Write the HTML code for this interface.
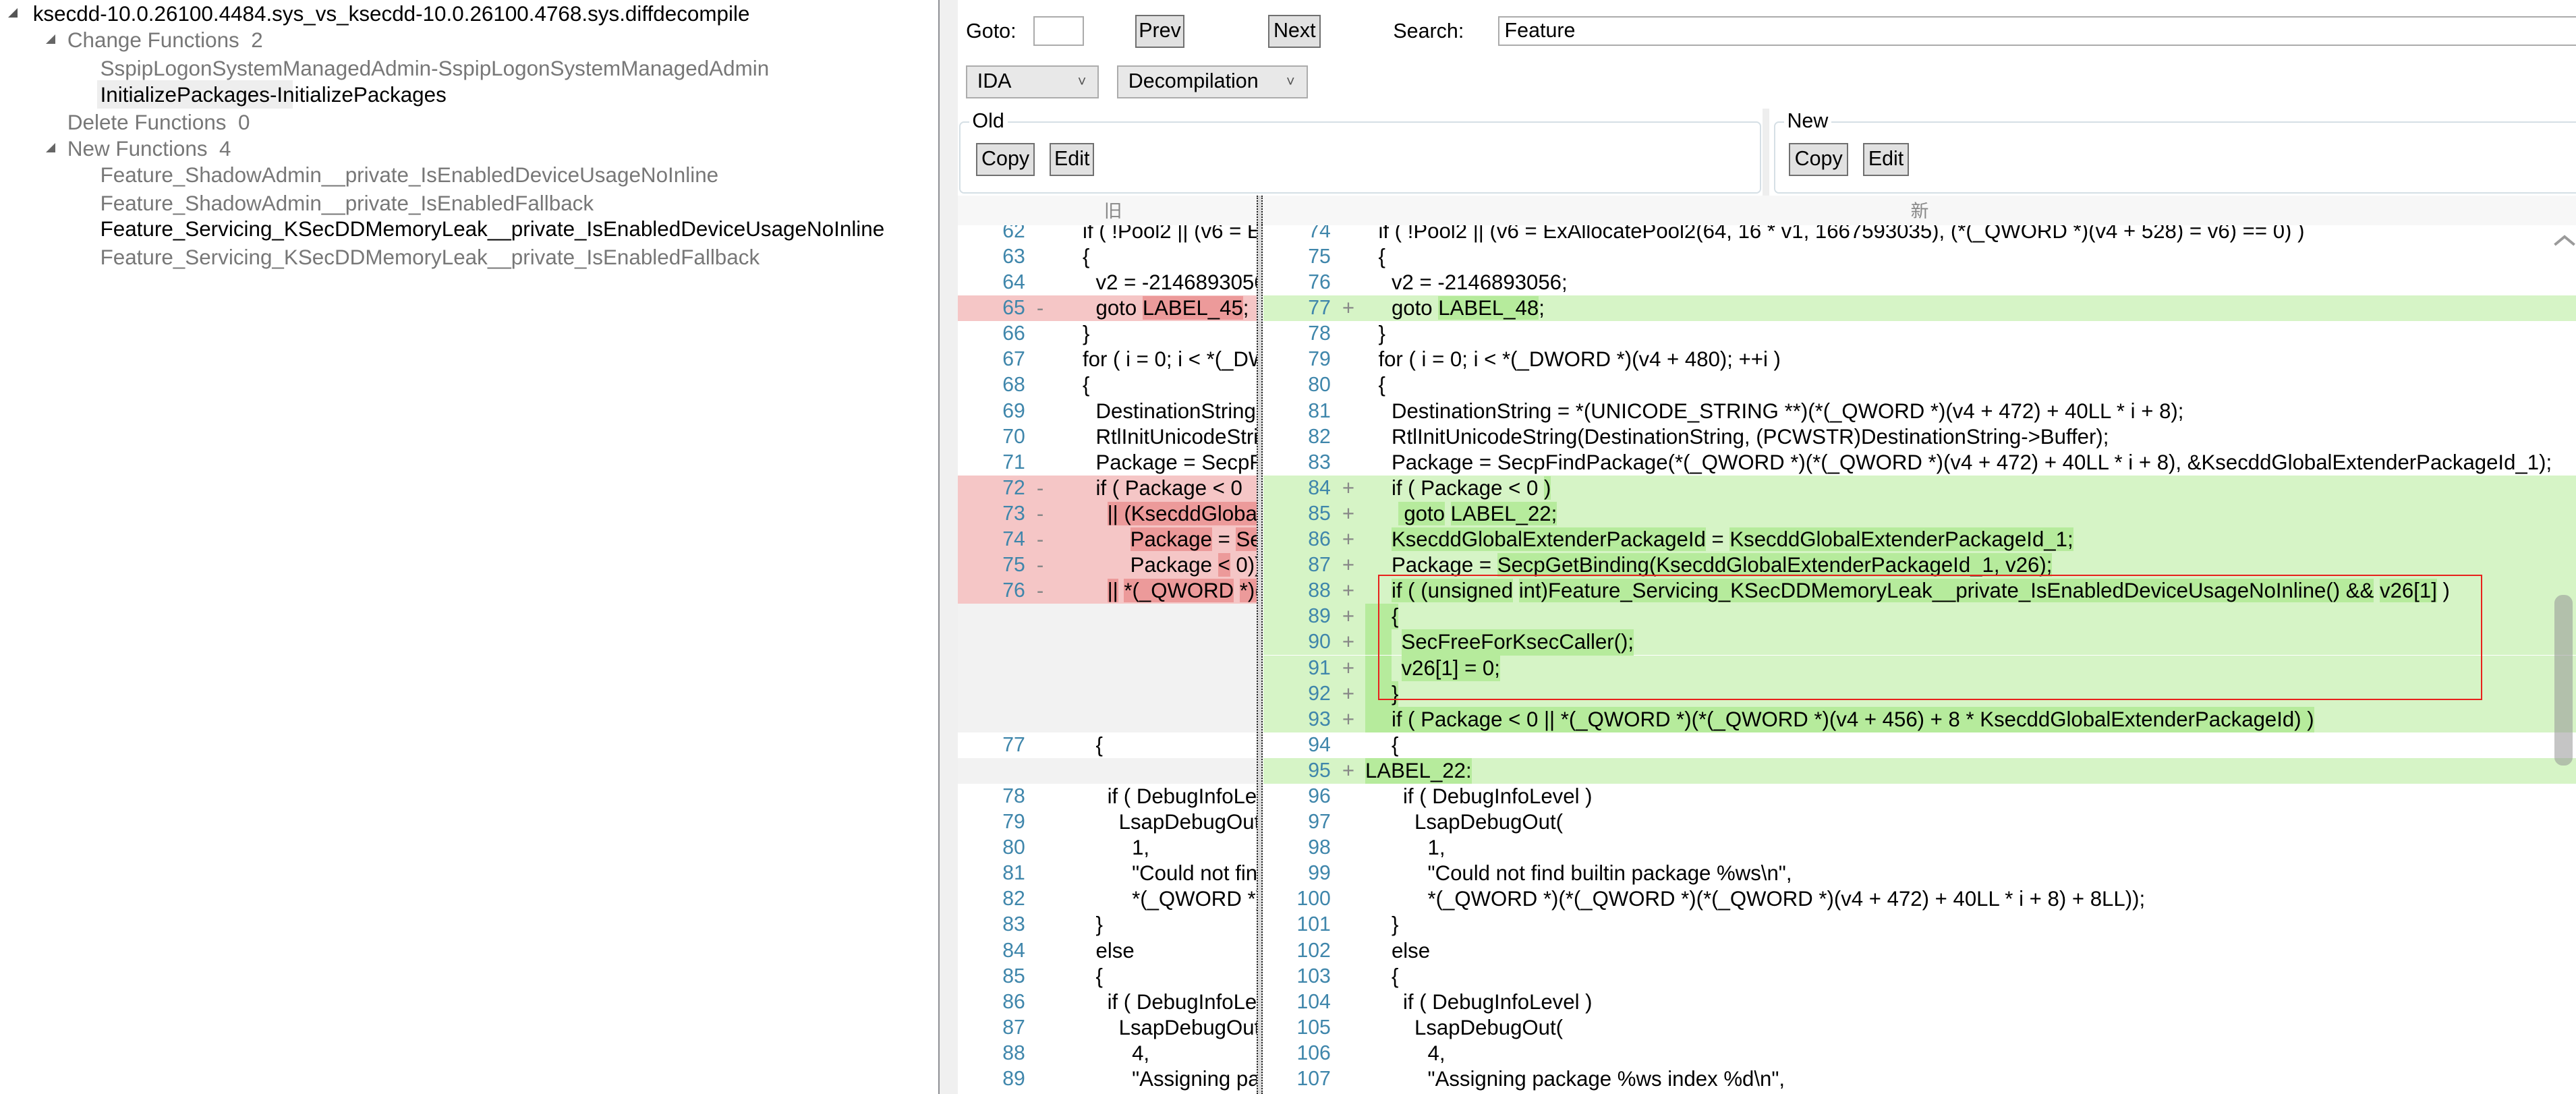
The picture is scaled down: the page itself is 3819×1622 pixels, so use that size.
<!DOCTYPE html>
<html><head><meta charset="utf-8">
<style>
html,body{margin:0;padding:0;background:#fff;overflow:hidden;width:3819px;height:1621px}
#w{position:absolute;left:0;top:0;width:1568px;height:666px;zoom:2.43559;font-family:"Liberation Sans","Noto Sans CJK SC",sans-serif;color:#000;overflow:hidden}
.a{position:absolute}
.t{position:absolute;font-size:12.9px;white-space:nowrap;line-height:16px}
.tri{position:absolute;width:0;height:0;border-left:6px solid transparent;border-bottom:6px solid #555}
.g{color:#777}
.btn{position:absolute;background:#e1e1e1;border:1px solid #707070;font-size:12.5px;line-height:18px;text-align:center;box-sizing:border-box}
.inp{position:absolute;background:#fff;border:1px solid #ababab;box-sizing:border-box;font-size:12.5px;line-height:16px;padding-left:3px}
.cmb{position:absolute;background:#e8e8e8;border:1px solid #acacac;box-sizing:border-box;font-size:12.5px;line-height:18px;padding-left:6px}
.cmb i{position:absolute;right:7px;top:0;font-style:normal;font-size:9px;color:#555}
.grp{position:absolute;border:1px solid #d5dfe5;border-radius:3px;box-sizing:border-box}
.grp b{position:absolute;top:-9px;left:5px;background:#fff;padding:0 2px;font-weight:normal;font-size:12.5px;line-height:16px}
.pane{position:absolute;top:119px;height:547px;overflow:hidden}
.r{position:absolute;left:0;right:0;height:15.64px;font-size:12.8px;line-height:15.64px;white-space:pre}
.n{position:absolute;text-align:right;color:#3f86ab;font-size:12.4px}
.s{position:absolute;color:#888}
.c{position:absolute}
.del{background:#f5c6c6}
.add{background:#d6f4c6}
.emp{background:#f2f2f2}
.del .d{background:#ec9a9a}
.add .d{background:#b6eb9c}
.strip{position:absolute;top:0;height:15.64px;left:62px;width:16px;background:#b6eb9c}
</style></head><body><div id="w">
<div class="tri" style="left:5px;top:5px"></div>
<div class="t" style="left:20px;top:1px">ksecdd-10.0.26100.4484.sys_vs_ksecdd-10.0.26100.4768.sys.diffdecompile</div>
<div class="tri" style="left:28px;top:21px;border-bottom-color:#666"></div>
<div class="t g" style="left:41px;top:17px">Change Functions&nbsp; 2</div>
<div class="t g" style="left:61px;top:34px">SspipLogonSystemManagedAdmin-SspipLogonSystemManagedAdmin</div>
<div class="a" style="left:59px;top:49px;width:119px;height:17px;background:#eeeeee"></div>
<div class="t" style="left:61px;top:50px">InitializePackages-InitializePackages</div>
<div class="t g" style="left:41px;top:67px">Delete Functions&nbsp; 0</div>
<div class="tri" style="left:28px;top:87px;border-bottom-color:#666"></div>
<div class="t g" style="left:41px;top:83px">New Functions&nbsp; 4</div>
<div class="t g" style="left:61px;top:99px">Feature_ShadowAdmin__private_IsEnabledDeviceUsageNoInline</div>
<div class="t g" style="left:61px;top:116px">Feature_ShadowAdmin__private_IsEnabledFallback</div>
<div class="t" style="left:61px;top:132px">Feature_Servicing_KSecDDMemoryLeak__private_IsEnabledDeviceUsageNoInline</div>
<div class="t g" style="left:61px;top:149px">Feature_Servicing_KSecDDMemoryLeak__private_IsEnabledFallback</div>
<div class="a" style="left:571px;top:0;width:1px;height:666px;background:#8e8f94"></div>
<div class="a" style="left:572px;top:0;width:11px;height:666px;background:#f0f0f0"></div>
<div class="t" style="left:588px;top:11px;font-size:12.5px">Goto:</div>
<div class="inp" style="left:629px;top:10px;width:31px;height:18px"></div>
<div class="btn" style="left:691px;top:9px;width:30px;height:20px">Prev</div>
<div class="btn" style="left:772px;top:9px;width:32px;height:20px">Next</div>
<div class="t" style="left:848px;top:11px;font-size:12.5px">Search:</div>
<div class="inp" style="left:912px;top:10px;width:660px;height:18px">Feature</div>
<div class="cmb" style="left:588px;top:40px;width:81px;height:20px">IDA<i>˅</i></div>
<div class="cmb" style="left:680px;top:40px;width:116px;height:20px">Decompilation<i>˅</i></div>
<div class="grp" style="left:584px;top:74px;width:488px;height:44px"><b>Old</b></div>
<div class="btn" style="left:594px;top:87px;width:36px;height:20px">Copy</div>
<div class="btn" style="left:639px;top:87px;width:27px;height:20px">Edit</div>
<div class="a" style="left:1073px;top:66px;width:4px;height:53px;background:#eeeeee"></div>
<div class="grp" style="left:1080px;top:74px;width:492px;height:44px"><b>New</b></div>
<div class="btn" style="left:1089px;top:87px;width:36px;height:20px">Copy</div>
<div class="btn" style="left:1134px;top:87px;width:28px;height:20px">Edit</div>

<div class="pane" style="left:583px;width:182px">
<div class="r" style="top:14px"><span class="n" style="left:0;width:41px">62</span><span class="c" style="left:76px">if ( !Pool2 || (v6 = ExAllocatePool2(64, 16 * v1, 1667593035)</span></div>
<div class="r" style="top:29.64px"><span class="n" style="left:0;width:41px">63</span><span class="c" style="left:76px">{</span></div>
<div class="r" style="top:45.28px"><span class="n" style="left:0;width:41px">64</span><span class="c" style="left:84px">v2 = -2146893056;</span></div>
<div class="r del" style="top:60.92px"><span class="n" style="left:0;width:41px">65</span><span class="s" style="left:48px">-</span><span class="c" style="left:84px">goto <span class="d">LABEL_45</span>;</span></div>
<div class="r" style="top:76.56px"><span class="n" style="left:0;width:41px">66</span><span class="c" style="left:76px">}</span></div>
<div class="r" style="top:92.2px"><span class="n" style="left:0;width:41px">67</span><span class="c" style="left:76px">for ( i = 0; i &lt; *(_DWORD *)(v4 + 480); ++i )</span></div>
<div class="r" style="top:107.84px"><span class="n" style="left:0;width:41px">68</span><span class="c" style="left:76px">{</span></div>
<div class="r" style="top:123.48px"><span class="n" style="left:0;width:41px">69</span><span class="c" style="left:84px">DestinationString = *(UNICODE_STRING **)</span></div>
<div class="r" style="top:139.12px"><span class="n" style="left:0;width:41px">70</span><span class="c" style="left:84px">RtlInitUnicodeString(DestinationString</span></div>
<div class="r" style="top:154.76px"><span class="n" style="left:0;width:41px">71</span><span class="c" style="left:84px">Package = SecpFindPackage(*(_QWORD</span></div>
<div class="r del" style="top:170.4px"><span class="n" style="left:0;width:41px">72</span><span class="s" style="left:48px">-</span><span class="c" style="left:84px">if ( Package &lt; 0</span></div>
<div class="r del" style="top:186.04px"><span class="n" style="left:0;width:41px">73</span><span class="s" style="left:48px">-</span><span class="c" style="left:91px"><span class="d">|| (KsecddGlobalExtenderPackageId</span></span></div>
<div class="r del" style="top:201.68px"><span class="n" style="left:0;width:41px">74</span><span class="s" style="left:48px">-</span><span class="c" style="left:105px"><span class="d">Package</span> = <span class="d">SecpGetBinding(</span></span></div>
<div class="r del" style="top:217.32px"><span class="n" style="left:0;width:41px">75</span><span class="s" style="left:48px">-</span><span class="c" style="left:105px">Package <span class="d">&lt;</span> 0))</span></div>
<div class="r del" style="top:232.96px"><span class="n" style="left:0;width:41px">76</span><span class="s" style="left:48px">-</span><span class="c" style="left:91px"><span class="d">||</span> <span class="d">*(_QWORD</span> <span class="d">*)(*(_QWORD</span></span></div>
<div class="r emp" style="top:248.6px;height:78.2px"></div>
<div class="r" style="top:326.8px"><span class="n" style="left:0;width:41px">77</span><span class="c" style="left:84px">{</span></div>
<div class="r emp" style="top:342.44px"></div>
<div class="r" style="top:358.08px"><span class="n" style="left:0;width:41px">78</span><span class="c" style="left:91px">if ( DebugInfoLevel )</span></div>
<div class="r" style="top:373.72px"><span class="n" style="left:0;width:41px">79</span><span class="c" style="left:98px">LsapDebugOut(</span></div>
<div class="r" style="top:389.36px"><span class="n" style="left:0;width:41px">80</span><span class="c" style="left:106px">1,</span></div>
<div class="r" style="top:405px"><span class="n" style="left:0;width:41px">81</span><span class="c" style="left:106px">"Could not find builtin</span></div>
<div class="r" style="top:420.64px"><span class="n" style="left:0;width:41px">82</span><span class="c" style="left:106px">*(_QWORD *)(*(_QWORD</span></div>
<div class="r" style="top:436.28px"><span class="n" style="left:0;width:41px">83</span><span class="c" style="left:84px">}</span></div>
<div class="r" style="top:451.92px"><span class="n" style="left:0;width:41px">84</span><span class="c" style="left:84px">else</span></div>
<div class="r" style="top:467.56px"><span class="n" style="left:0;width:41px">85</span><span class="c" style="left:84px">{</span></div>
<div class="r" style="top:483.2px"><span class="n" style="left:0;width:41px">86</span><span class="c" style="left:91px">if ( DebugInfoLevel )</span></div>
<div class="r" style="top:498.84px"><span class="n" style="left:0;width:41px">87</span><span class="c" style="left:98px">LsapDebugOut(</span></div>
<div class="r" style="top:514.48px"><span class="n" style="left:0;width:41px">88</span><span class="c" style="left:106px">4,</span></div>
<div class="r" style="top:530.12px"><span class="n" style="left:0;width:41px">89</span><span class="c" style="left:106px">"Assigning package</span></div>
</div>
<div class="a" style="left:765px;top:119px;width:2px;height:547px;background:#dcdcdc;border-left:1px dotted #222;border-right:1px dotted #222"></div>

<div class="pane" style="left:769px;width:799px">
<div class="r" style="top:14px"><span class="n" style="left:0;width:41px">74</span><span class="c" style="left:70px">if ( !Pool2 || (v6 = ExAllocatePool2(64, 16 * v1, 1667593035), (*(_QWORD *)(v4 + 528) = v6) == 0) )</span></div>
<div class="r" style="top:29.64px"><span class="n" style="left:0;width:41px">75</span><span class="c" style="left:70px">{</span></div>
<div class="r" style="top:45.28px"><span class="n" style="left:0;width:41px">76</span><span class="c" style="left:78px">v2 = -2146893056;</span></div>
<div class="r add" style="top:60.92px"><span class="n" style="left:0;width:41px">77</span><span class="s" style="left:48px">+</span><span class="c" style="left:78px">goto <span class="d">LABEL_48</span>;</span></div>
<div class="r" style="top:76.56px"><span class="n" style="left:0;width:41px">78</span><span class="c" style="left:70px">}</span></div>
<div class="r" style="top:92.2px"><span class="n" style="left:0;width:41px">79</span><span class="c" style="left:70px">for ( i = 0; i &lt; *(_DWORD *)(v4 + 480); ++i )</span></div>
<div class="r" style="top:107.84px"><span class="n" style="left:0;width:41px">80</span><span class="c" style="left:70px">{</span></div>
<div class="r" style="top:123.48px"><span class="n" style="left:0;width:41px">81</span><span class="c" style="left:78px">DestinationString = *(UNICODE_STRING **)(*(_QWORD *)(v4 + 472) + 40LL * i + 8);</span></div>
<div class="r" style="top:139.12px"><span class="n" style="left:0;width:41px">82</span><span class="c" style="left:78px">RtlInitUnicodeString(DestinationString, (PCWSTR)DestinationString-&gt;Buffer);</span></div>
<div class="r" style="top:154.76px"><span class="n" style="left:0;width:41px">83</span><span class="c" style="left:78px">Package = SecpFindPackage(*(_QWORD *)(*(_QWORD *)(v4 + 472) + 40LL * i + 8), &amp;KsecddGlobalExtenderPackageId_1);</span></div>
<div class="r add" style="top:170.4px"><span class="n" style="left:0;width:41px">84</span><span class="s" style="left:48px">+</span><span class="c" style="left:78px">if ( Package &lt; 0 <span class="d">)</span></span></div>
<div class="r add" style="top:186.04px"><span class="n" style="left:0;width:41px">85</span><span class="s" style="left:48px">+</span><span class="c" style="left:82px"><span class="d"> goto</span> <span class="d">LABEL_22;</span></span></div>
<div class="r add" style="top:201.68px"><span class="n" style="left:0;width:41px">86</span><span class="s" style="left:48px">+</span><span class="c" style="left:78px"><span class="d">KsecddGlobalExtenderPackageId</span> = <span class="d">KsecddGlobalExtenderPackageId_1;</span></span></div>
<div class="r add" style="top:217.32px"><span class="n" style="left:0;width:41px">87</span><span class="s" style="left:48px">+</span><span class="c" style="left:78px">Package = <span class="d">SecpGetBinding(KsecddGlobalExtenderPackageId_1, v26);</span></span></div>
<div class="r add" style="top:232.96px"><span class="n" style="left:0;width:41px">88</span><span class="s" style="left:48px">+</span><span class="c" style="left:78px"><span class="d">if ( (unsigned</span> <span class="d">int)Feature_Servicing_KSecDDMemoryLeak__private_IsEnabledDeviceUsageNoInline() &amp;&amp;</span> <span class="d">v26[1]</span> )</span></div>
<div class="r add" style="top:248.6px"><span class="n" style="left:0;width:41px">89</span><span class="s" style="left:48px">+</span><span class="strip"></span><span class="c d" style="left:78px">{</span></div>
<div class="r add" style="top:264.24px"><span class="n" style="left:0;width:41px">90</span><span class="s" style="left:48px">+</span><span class="strip"></span><span class="c d" style="left:84px">SecFreeForKsecCaller();</span></div>
<div class="r add" style="top:279.88px"><span class="n" style="left:0;width:41px">91</span><span class="s" style="left:48px">+</span><span class="strip"></span><span class="c d" style="left:84px">v26[1] = 0;</span></div>
<div class="r add" style="top:295.52px"><span class="n" style="left:0;width:41px">92</span><span class="s" style="left:48px">+</span><span class="strip"></span><span class="c d" style="left:78px">}</span></div>
<div class="r add" style="top:311.16px"><span class="n" style="left:0;width:41px">93</span><span class="s" style="left:48px">+</span><span class="strip"></span><span class="c d" style="left:78px">if ( Package &lt; 0 || *(_QWORD *)(*(_QWORD *)(v4 + 456) + 8 * KsecddGlobalExtenderPackageId) )</span></div>
<div class="r" style="top:326.8px"><span class="n" style="left:0;width:41px">94</span><span class="c" style="left:78px">{</span></div>
<div class="r add" style="top:342.44px"><span class="n" style="left:0;width:41px">95</span><span class="s" style="left:48px">+</span><span class="c d" style="left:62px">LABEL_22:</span></div>
<div class="r" style="top:358.08px"><span class="n" style="left:0;width:41px">96</span><span class="c" style="left:85px">if ( DebugInfoLevel )</span></div>
<div class="r" style="top:373.72px"><span class="n" style="left:0;width:41px">97</span><span class="c" style="left:92px">LsapDebugOut(</span></div>
<div class="r" style="top:389.36px"><span class="n" style="left:0;width:41px">98</span><span class="c" style="left:100px">1,</span></div>
<div class="r" style="top:405px"><span class="n" style="left:0;width:41px">99</span><span class="c" style="left:100px">"Could not find builtin package %ws\n",</span></div>
<div class="r" style="top:420.64px"><span class="n" style="left:0;width:41px">100</span><span class="c" style="left:100px">*(_QWORD *)(*(_QWORD *)(*(_QWORD *)(v4 + 472) + 40LL * i + 8) + 8LL));</span></div>
<div class="r" style="top:436.28px"><span class="n" style="left:0;width:41px">101</span><span class="c" style="left:78px">}</span></div>
<div class="r" style="top:451.92px"><span class="n" style="left:0;width:41px">102</span><span class="c" style="left:78px">else</span></div>
<div class="r" style="top:467.56px"><span class="n" style="left:0;width:41px">103</span><span class="c" style="left:78px">{</span></div>
<div class="r" style="top:483.2px"><span class="n" style="left:0;width:41px">104</span><span class="c" style="left:85px">if ( DebugInfoLevel )</span></div>
<div class="r" style="top:498.84px"><span class="n" style="left:0;width:41px">105</span><span class="c" style="left:92px">LsapDebugOut(</span></div>
<div class="r" style="top:514.48px"><span class="n" style="left:0;width:41px">106</span><span class="c" style="left:100px">4,</span></div>
<div class="r" style="top:530.12px"><span class="n" style="left:0;width:41px">107</span><span class="c" style="left:100px">"Assigning package %ws index %d\n",</span></div>
<div class="a" style="left:70px;top:231px;width:672px;height:76px;border:1px solid #e8211c;box-sizing:border-box"></div>
<svg class="a" style="left:785px;top:23px" width="14" height="9" viewBox="0 0 14 9"><path d="M1 7 L7 2 L13 7" fill="none" stroke="#9a9a9a" stroke-width="1.6"/></svg>
<div class="a" style="left:786px;top:243px;width:11px;height:104px;border-radius:5px;background:rgba(150,150,150,0.55)"></div>
</div>
<div class="a" style="left:583px;top:119px;width:985px;height:18px;background:#f7f7f7"></div>
<div class="t" style="left:672px;top:120px;color:#888;font-family:'Noto Sans CJK SC',sans-serif;font-size:11px">旧</div>
<div class="t" style="left:1163px;top:120px;color:#888;font-family:'Noto Sans CJK SC',sans-serif;font-size:11px">新</div>
<div class="a" style="left:765px;top:119px;width:2px;height:18px;background:#dcdcdc;border-left:1px dotted #222;border-right:1px dotted #222"></div>
</div></body></html>
